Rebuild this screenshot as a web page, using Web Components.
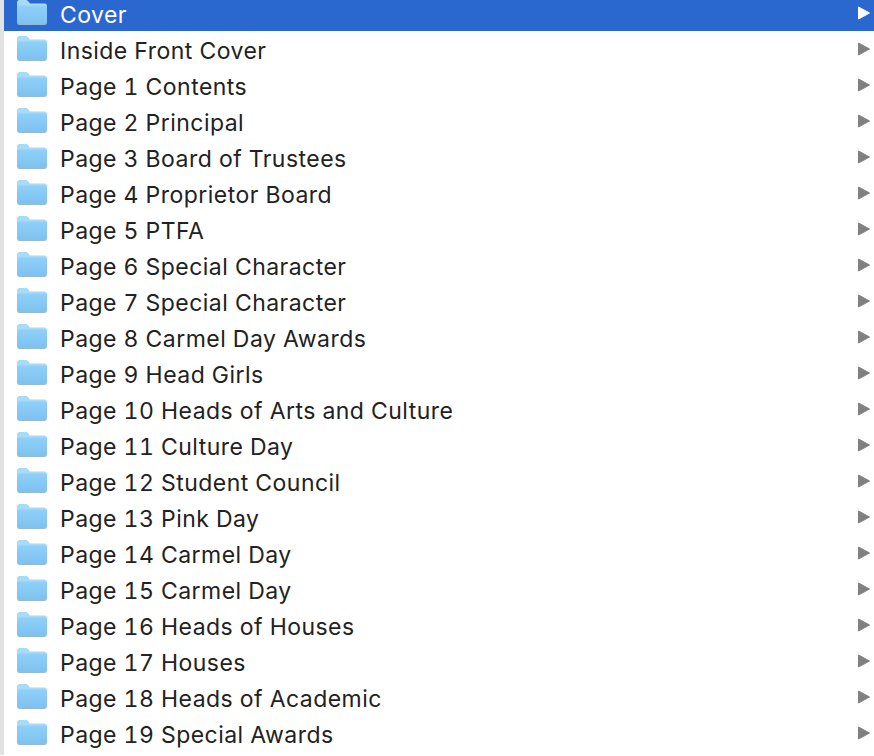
<!DOCTYPE html>
<html>
<head>
<meta charset="utf-8">
<title>Folders</title>
<style>
html,body {margin:0;padding:0;background:#fff;overflow:hidden;}
body {width:874px;height:756px;}
</style>
</head>
<body>
<finder-list>
  <finder-row selected>Cover</finder-row>
  <finder-row>Inside Front Cover</finder-row>
  <finder-row>Page 1 Contents</finder-row>
  <finder-row>Page 2 Principal</finder-row>
  <finder-row>Page 3 Board of Trustees</finder-row>
  <finder-row>Page 4 Proprietor Board</finder-row>
  <finder-row>Page 5 PTFA</finder-row>
  <finder-row>Page 6 Special Character</finder-row>
  <finder-row>Page 7 Special Character</finder-row>
  <finder-row>Page 8 Carmel Day Awards</finder-row>
  <finder-row>Page 9 Head Girls</finder-row>
  <finder-row>Page 10 Heads of Arts and Culture</finder-row>
  <finder-row>Page 11 Culture Day</finder-row>
  <finder-row>Page 12 Student Council</finder-row>
  <finder-row>Page 13 Pink Day</finder-row>
  <finder-row>Page 14 Carmel Day</finder-row>
  <finder-row>Page 15 Carmel Day</finder-row>
  <finder-row>Page 16 Heads of Houses</finder-row>
  <finder-row>Page 17 Houses</finder-row>
  <finder-row>Page 18 Heads of Academic</finder-row>
  <finder-row>Page 19 Special Awards</finder-row>
</finder-list>
<script>
(()=>{
  // column of rows, the left strip is the border of the previous column
  customElements.define("finder-list",class extends HTMLElement {
    constructor () {
      super();
      this.attachShadow({mode:"open"}).innerHTML = `
      <style>
      :host {
        display:block; height:756px; overflow:hidden;
        font-family:Inter,"Liberation Sans",sans-serif;
        font-size:23px; color:#222;
        font-variant-numeric:tabular-nums;
        letter-spacing:.46px;
      }
      .wrap {display:flex;height:756px;overflow:hidden;}
      .strip {width:4px;flex:none;height:755px;background:#e2e2e2;}
      .col {display:flex;flex-direction:column;flex:1;min-width:0;margin-top:-5px;}
      </style>
      <div class="wrap"><div class="strip"></div><div class="col"><slot></slot></div></div>`;
    }
  });

  customElements.define("finder-row",class extends HTMLElement {
    constructor () {
      super();
      this.attachShadow({mode:"open"}).innerHTML = `
      <style>
      :host {
        display:flex; align-items:center; flex:none;
        height:36px; padding:0 4px 0 13px; box-sizing:border-box;
      }
      :host([selected]) {background:#2a68d0;color:#fff;}
      svg.folder {width:30px;height:25px;flex:none;display:block;margin-top:-1px;}
      .name {flex:1;margin-left:13px;white-space:nowrap;padding-top:3px;}
      svg.arrow {width:12px;height:14px;flex:none;display:block;}
      .arrow path {fill:#808080;stroke:#808080;stroke-width:1;stroke-linejoin:round;}
      :host([selected]) .arrow path {fill:#fff;stroke:#fff;}
      </style>
      <svg class="folder" viewBox="0 0 30 25">
        <defs>
          <linearGradient id="f" x1="0" y1="0" x2="0" y2="1">
            <stop offset="0" stop-color="#90d0f8"/>
            <stop offset="1" stop-color="#7cc2f0"/>
          </linearGradient>
        </defs>
        <path d="M0 2.500C0 1 1 0 2.400 0h6.200c1.200 0 1.800.4 2.400 1.100L13 3.400h14.600C29 3.400 30 4.400 30 5.800v15.800c0 1.400-1 2.400-2.400 2.400H2.400C1 24 0 23 0 21.600z" fill="#a8dafa"/>
        <path d="M0 6.800c0-.8.600-1.400 1.400-1.400h27.200c.8 0 1.400.6 1.400 1.400v14.800c0 1.400-1 2.400-2.400 2.400H2.400C1 24 0 23 0 21.600z" fill="url(#f)"/>
        <path d="M0 21.600c0 1.400 1 2.400 2.400 2.400h25.200c1.400 0 2.400-1 2.400-2.400v1c0 1.400-1 2.400-2.400 2.400H2.400C1 25 0 24 0 22.600z" fill="#9ab9d0"/>
      </svg>
      <span class="name"><slot></slot></span>
      <svg class="arrow" viewBox="0 0 12 14"><path d="M.5 1 11.500 7 .5 13z"/></svg>`;
    }
  });
})();
</script>
</body>
</html>
